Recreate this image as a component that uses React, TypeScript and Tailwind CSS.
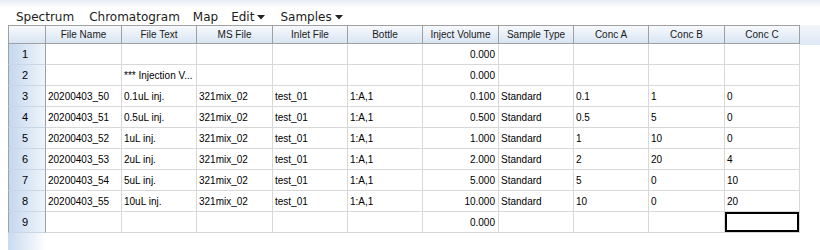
import { Fragment } from 'react'

const columns = [
  'File Name',
  'File Text',
  'MS File',
  'Inlet File',
  'Bottle',
  'Inject Volume',
  'Sample Type',
  'Conc A',
  'Conc B',
  'Conc C',
]

// index 5 (Inject Volume) is right aligned
const rows: string[][] = [
  ['', '', '', '', '', '0.000', '', '', '', ''],
  ['', '*** Injection V...', '', '', '', '0.000', '', '', '', ''],
  ['20200403_50', '0.1uL inj.', '321mix_02', 'test_01', '1:A,1', '0.100', 'Standard', '0.1', '1', '0'],
  ['20200403_51', '0.5uL inj.', '321mix_02', 'test_01', '1:A,1', '0.500', 'Standard', '0.5', '5', '0'],
  ['20200403_52', '1uL inj.', '321mix_02', 'test_01', '1:A,1', '1.000', 'Standard', '1', '10', '0'],
  ['20200403_53', '2uL inj.', '321mix_02', 'test_01', '1:A,1', '2.000', 'Standard', '2', '20', '4'],
  ['20200403_54', '5uL inj.', '321mix_02', 'test_01', '1:A,1', '5.000', 'Standard', '5', '0', '10'],
  ['20200403_55', '10uL inj.', '321mix_02', 'test_01', '1:A,1', '10.000', 'Standard', '10', '0', '20'],
  ['', '', '', '', '', '0.000', '', '', '', ''],
]

const Caret = () => (
  <svg width="8" height="5" viewBox="0 0 8 5" className="ml-[3px] mt-[2px]">
    <path d="M0 0h8L4 4.5z" fill="#222" />
  </svg>
)

function MenuBar() {
  return (
    <nav className="flex h-[17px] items-center gap-[15px] pl-[16px] font-['DejaVu_Sans',sans-serif] text-[12px] text-[#1c1c1c]">
      <span>Spectrum</span>
      <span>Chromatogram</span>
      <span className="-ml-[2px]">Map</span>
      <span className="-ml-[2px] flex items-center">
        Edit
        <Caret />
      </span>
      <span className="flex items-center">
        Samples
        <Caret />
      </span>
    </nav>
  )
}

export default function App() {
  return (
    <div className="h-[250px] w-[820px] overflow-hidden bg-white font-['Liberation_Sans',Arial,sans-serif] text-[10px] text-black">
      <div className="h-[8px] bg-linear-to-b from-[#e6ecf5] to-white" />
      <MenuBar />

      <div className="flex">
        <div className="ml-[8px] grid grid-cols-[38px_76px_75px_76px_75px_75px_76px_75px_75px_76px_75px]">
          {/* header */}
          <div className="h-[19px] border-y border-x border-[#a0a0a0] bg-linear-to-b from-[#f6f9fd] to-[#d9e5f3]" />
          {columns.map((c) => (
            <div
              key={c}
              className="flex h-[19px] items-center justify-center border-y border-r border-[#a0a0a0] bg-linear-to-b from-[#f6f9fd] to-[#d9e5f3] text-[#1a1a1a]"
            >
              {c}
            </div>
          ))}

          {rows.map((row, r) => (
            <Fragment key={r}>
              <div className="flex h-[21px] items-center justify-center border-x border-b border-l-[#a0a0a0] border-r-[#a0a0a0] border-b-[#c8d6e6] bg-linear-to-r from-[#c5d8ee] to-[#eef4fb] pr-[4px] text-[11px]">
                {r + 1}
              </div>
              {row.map((v, c) => {
                const selected = r === 8 && c === 9
                return (
                  <div
                    key={c}
                    className={
                      'flex h-[21px] items-center overflow-hidden whitespace-nowrap border-r border-b border-[#d8d8d8] ' +
                      (c === 5 ? 'justify-end pr-[3px] ' : 'pl-[2px] ') +
                      (selected ? 'ring-2 ring-inset ring-black' : '')
                    }
                  >
                    {v}
                  </div>
                )
              })}
            </Fragment>
          ))}

          <div className="h-[20px] bg-linear-to-r from-[#c9dbf0] via-[#e3ecf7] to-white" />
        </div>

        <div className="h-[20px] flex-1 bg-linear-to-b from-[#f3f7fc] to-[#dde8f5]" />
      </div>
    </div>
  )
}
